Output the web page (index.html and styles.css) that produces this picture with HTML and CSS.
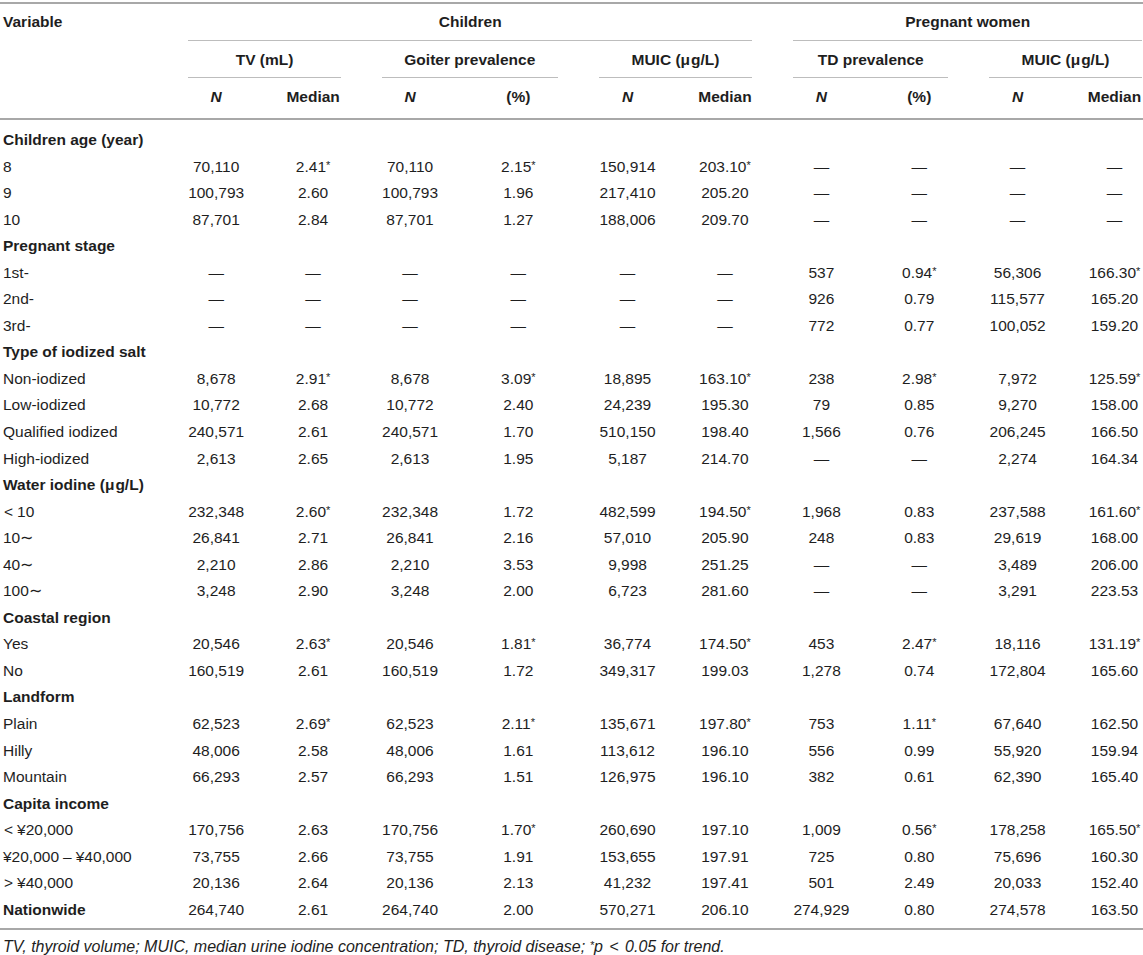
FILE: index.html
```html
<!DOCTYPE html>
<html lang="en">
<head>
<meta charset="utf-8">
<title>Table</title>
<link rel="stylesheet" href="styles.css">
</head>
<body>
<div class="page">
<table class="tbl">
  <thead>
    <tr class="h1">
      <th class="var" rowspan="3">Variable</th>
      <th class="grp" colspan="6"><div class="ul">Children</div></th>
      <th class="grp last" colspan="4"><div class="ul">Pregnant women</div></th>
    </tr>
    <tr class="h2">
      <th class="grp" colspan="2"><div class="ul">TV (mL)</div></th>
      <th class="grp" colspan="2"><div class="ul">Goiter prevalence</div></th>
      <th class="grp" colspan="2"><div class="ul">MUIC (<span class="mu">μ</span>g/L)</div></th>
      <th class="grp" colspan="2"><div class="ul">TD prevalence</div></th>
      <th class="grp last" colspan="2"><div class="ul">MUIC (<span class="mu">μ</span>g/L)</div></th>
    </tr>
    <tr class="h3">
      <th class="c w-tvn"><i>N</i></th>
      <th class="c w-tvm">Median</th>
      <th class="c w-gn"><i>N</i></th>
      <th class="c w-gp">(%)</th>
      <th class="c w-mn"><i>N</i></th>
      <th class="c w-mm">Median</th>
      <th class="c w-tn"><i>N</i></th>
      <th class="c w-tp">(%)</th>
      <th class="c w-pn"><i>N</i></th>
      <th class="c w-pm last">Median</th>
    </tr>
  </thead>
  <tbody>
    <tr class="sec first"><td class="lbl" colspan="11">Children age (year)</td></tr>
    <tr><td class="lbl">8</td><td>70,110</td><td>2.41<span class="ast">*</span></td><td>70,110</td><td>2.15<span class="ast">*</span></td><td>150,914</td><td>203.10<span class="ast">*</span></td><td>—</td><td>—</td><td>—</td><td class="last">—</td></tr>
    <tr><td class="lbl">9</td><td>100,793</td><td>2.60</td><td>100,793</td><td>1.96</td><td>217,410</td><td>205.20</td><td>—</td><td>—</td><td>—</td><td class="last">—</td></tr>
    <tr><td class="lbl">10</td><td>87,701</td><td>2.84</td><td>87,701</td><td>1.27</td><td>188,006</td><td>209.70</td><td>—</td><td>—</td><td>—</td><td class="last">—</td></tr>
    <tr class="sec"><td class="lbl" colspan="11">Pregnant stage</td></tr>
    <tr><td class="lbl">1st-</td><td>—</td><td>—</td><td>—</td><td>—</td><td>—</td><td>—</td><td>537</td><td>0.94<span class="ast">*</span></td><td>56,306</td><td class="last">166.30<span class="ast">*</span></td></tr>
    <tr><td class="lbl">2nd-</td><td>—</td><td>—</td><td>—</td><td>—</td><td>—</td><td>—</td><td>926</td><td>0.79</td><td>115,577</td><td class="last">165.20</td></tr>
    <tr><td class="lbl">3rd-</td><td>—</td><td>—</td><td>—</td><td>—</td><td>—</td><td>—</td><td>772</td><td>0.77</td><td>100,052</td><td class="last">159.20</td></tr>
    <tr class="sec"><td class="lbl" colspan="11">Type of iodized salt</td></tr>
    <tr><td class="lbl">Non-iodized</td><td>8,678</td><td>2.91<span class="ast">*</span></td><td>8,678</td><td>3.09<span class="ast">*</span></td><td>18,895</td><td>163.10<span class="ast">*</span></td><td>238</td><td>2.98<span class="ast">*</span></td><td>7,972</td><td class="last">125.59<span class="ast">*</span></td></tr>
    <tr><td class="lbl">Low-iodized</td><td>10,772</td><td>2.68</td><td>10,772</td><td>2.40</td><td>24,239</td><td>195.30</td><td>79</td><td>0.85</td><td>9,270</td><td class="last">158.00</td></tr>
    <tr><td class="lbl">Qualified iodized</td><td>240,571</td><td>2.61</td><td>240,571</td><td>1.70</td><td>510,150</td><td>198.40</td><td>1,566</td><td>0.76</td><td>206,245</td><td class="last">166.50</td></tr>
    <tr><td class="lbl">High-iodized</td><td>2,613</td><td>2.65</td><td>2,613</td><td>1.95</td><td>5,187</td><td>214.70</td><td>—</td><td>—</td><td>2,274</td><td class="last">164.34</td></tr>
    <tr class="sec"><td class="lbl" colspan="11">Water iodine (<span class="mu">μ</span>g/L)</td></tr>
    <tr><td class="lbl"><span class="op">&lt;</span>10</td><td>232,348</td><td>2.60<span class="ast">*</span></td><td>232,348</td><td>1.72</td><td>482,599</td><td>194.50<span class="ast">*</span></td><td>1,968</td><td>0.83</td><td>237,588</td><td class="last">161.60<span class="ast">*</span></td></tr>
    <tr><td class="lbl">10∼</td><td>26,841</td><td>2.71</td><td>26,841</td><td>2.16</td><td>57,010</td><td>205.90</td><td>248</td><td>0.83</td><td>29,619</td><td class="last">168.00</td></tr>
    <tr><td class="lbl">40∼</td><td>2,210</td><td>2.86</td><td>2,210</td><td>3.53</td><td>9,998</td><td>251.25</td><td>—</td><td>—</td><td>3,489</td><td class="last">206.00</td></tr>
    <tr><td class="lbl">100∼</td><td>3,248</td><td>2.90</td><td>3,248</td><td>2.00</td><td>6,723</td><td>281.60</td><td>—</td><td>—</td><td>3,291</td><td class="last">223.53</td></tr>
    <tr class="sec"><td class="lbl" colspan="11">Coastal region</td></tr>
    <tr><td class="lbl">Yes</td><td>20,546</td><td>2.63<span class="ast">*</span></td><td>20,546</td><td>1.81<span class="ast">*</span></td><td>36,774</td><td>174.50<span class="ast">*</span></td><td>453</td><td>2.47<span class="ast">*</span></td><td>18,116</td><td class="last">131.19<span class="ast">*</span></td></tr>
    <tr><td class="lbl">No</td><td>160,519</td><td>2.61</td><td>160,519</td><td>1.72</td><td>349,317</td><td>199.03</td><td>1,278</td><td>0.74</td><td>172,804</td><td class="last">165.60</td></tr>
    <tr class="sec"><td class="lbl" colspan="11">Landform</td></tr>
    <tr><td class="lbl">Plain</td><td>62,523</td><td>2.69<span class="ast">*</span></td><td>62,523</td><td>2.11<span class="ast">*</span></td><td>135,671</td><td>197.80<span class="ast">*</span></td><td>753</td><td>1.11<span class="ast">*</span></td><td>67,640</td><td class="last">162.50</td></tr>
    <tr><td class="lbl">Hilly</td><td>48,006</td><td>2.58</td><td>48,006</td><td>1.61</td><td>113,612</td><td>196.10</td><td>556</td><td>0.99</td><td>55,920</td><td class="last">159.94</td></tr>
    <tr><td class="lbl">Mountain</td><td>66,293</td><td>2.57</td><td>66,293</td><td>1.51</td><td>126,975</td><td>196.10</td><td>382</td><td>0.61</td><td>62,390</td><td class="last">165.40</td></tr>
    <tr class="sec"><td class="lbl" colspan="11">Capita income</td></tr>
    <tr><td class="lbl"><span class="op">&lt;</span>¥20,000</td><td>170,756</td><td>2.63</td><td>170,756</td><td>1.70<span class="ast">*</span></td><td>260,690</td><td>197.10</td><td>1,009</td><td>0.56<span class="ast">*</span></td><td>178,258</td><td class="last">165.50<span class="ast">*</span></td></tr>
    <tr><td class="lbl">¥20,000<span class="dash">–</span>¥40,000</td><td>73,755</td><td>2.66</td><td>73,755</td><td>1.91</td><td>153,655</td><td>197.91</td><td>725</td><td>0.80</td><td>75,696</td><td class="last">160.30</td></tr>
    <tr><td class="lbl"><span class="op">&gt;</span>¥40,000</td><td>20,136</td><td>2.64</td><td>20,136</td><td>2.13</td><td>41,232</td><td>197.41</td><td>501</td><td>2.49</td><td>20,033</td><td class="last">152.40</td></tr>
    <tr class="total"><td class="lbl">Nationwide</td><td>264,740</td><td>2.61</td><td>264,740</td><td>2.00</td><td>570,271</td><td>206.10</td><td>274,929</td><td>0.80</td><td>274,578</td><td class="last">163.50</td></tr>
  </tbody>
</table>
<p class="note">TV, thyroid volume; MUIC, median urine iodine concentration; TD, thyroid disease; <span class="ast">*</span>p <span class="op-n">&lt;</span> 0.05 for trend.</p>
</div>
</body>
</html>
```

FILE: styles.css
```css
html, body {
  margin: 0;
  padding: 0;
  background: #ffffff;
}

.page {
  padding-top: 2px;
  font-family: "Liberation Sans", Arial, Helvetica, sans-serif;
  color: #1e1e1e;
  font-size: 15.5px;
}

.tbl {
  border-collapse: separate;
  border-spacing: 0;
  border-top: 2px solid #a8a8a8;
  border-bottom: 2px solid #a8a8a8;
}

.tbl th,
.tbl td {
  padding: 0 20.5px;
  text-align: center;
  white-space: nowrap;
  font-size: 15.5px;
}

.tbl th {
  font-weight: bold;
  line-height: 18px;
}

.tbl th i {
  font-style: italic;
}

.tbl .var {
  width: 145px;
  text-align: left;
  vertical-align: top;
  padding: 9px 20.5px 0 3px;
  border-bottom: 2px solid #a8a8a8;
}

.tbl .last {
  padding-right: 1px;
}

.grp {
  vertical-align: bottom;
}

.ul {
  border-bottom: 1px solid #bdbdbd;
}

.h1 .ul {
  padding: 9px 0 9px;
}

.h2 .ul {
  padding: 10px 0 8px;
}

.h3 th {
  padding-top: 10px;
  padding-bottom: 12px;
  border-bottom: 2px solid #a8a8a8;
}

.h3 .last {
  padding-right: 1px;
}

.w-tvn { width: 56px; }
.w-tvm { width: 56px; }
.w-gn { width: 54px; }
.w-gp { width: 81px; }
.w-mn { width: 58px; }
.w-mm { width: 55px; }
.w-tn { width: 51px; }
.w-tp { width: 59px; }
.w-pn { width: 57px; }
.w-pm { width: 55px; }

.tbl td {
  line-height: 26.55px;
}

.tbl td.lbl {
  text-align: left;
  padding-left: 3px;
}

.sec td {
  font-weight: bold;
}

.first td {
  padding-top: 7px;
}

.total td {
  padding-bottom: 5px;
}

.total td.lbl {
  font-weight: bold;
}

.mu {
  margin-right: 1px;
}

.op {
  margin-left: 1px;
  margin-right: 4px;
}

.dash {
  margin: 0 4px;
}

.ast {
  font-size: 11px;
  vertical-align: 3px;
  line-height: 0;
}

.note {
  margin: 8px 0 0;
  padding-left: 3px;
  font-style: italic;
  font-size: 16px;
  line-height: 18px;
}

.note .ast {
  font-size: 11px;
}

.op-n {
  margin: 0 2px;
}
```
